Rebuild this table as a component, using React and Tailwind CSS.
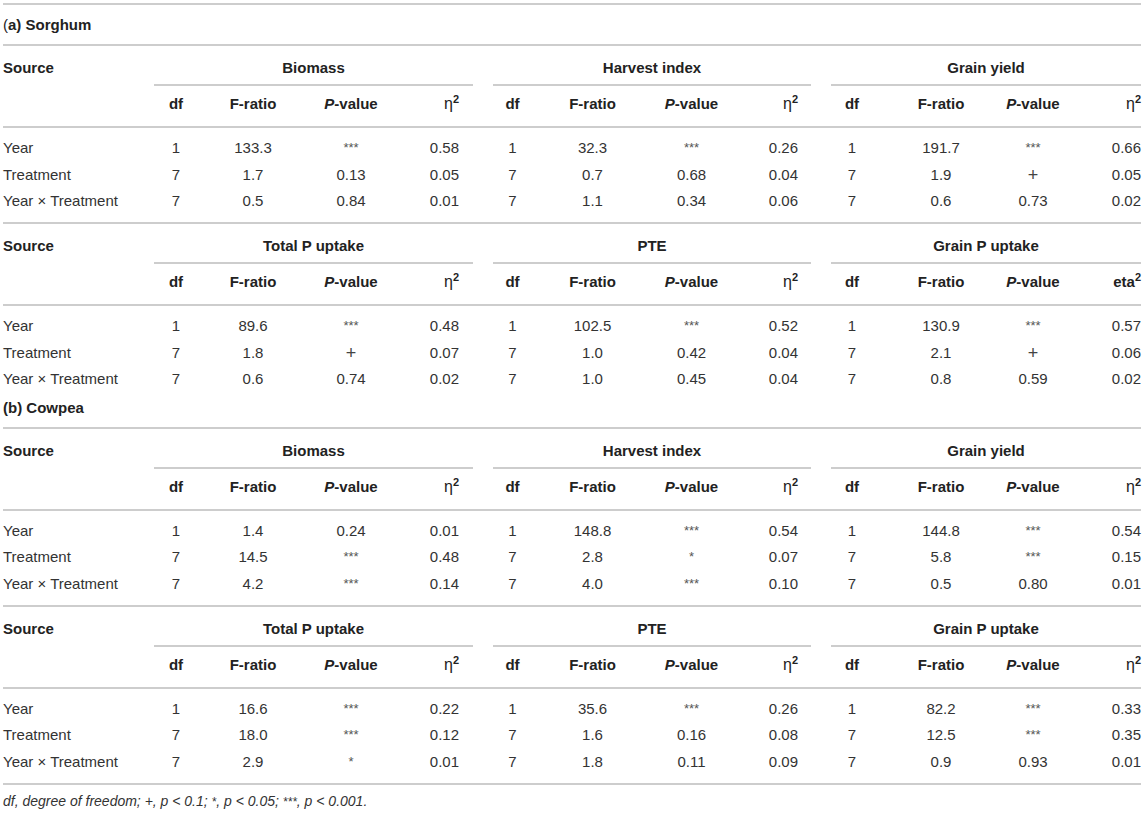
import React from "react";

const G = [
  { w: "w-[319px]", cols: "grid-cols-[44px_110px_86px_79px]", pr: "pr-[14px]" },
  { w: "w-[318px]", cols: "grid-cols-[39px_121px_77px_81px]", pr: "pr-[13px]" },
  { w: "w-[310px]", cols: "grid-cols-[42px_136px_48px_84px]", pr: "pr-0" },
];

const Line = () => <div className="h-[2px] bg-[#cdcdcd]" />;

function PVal({ v }) {
  if (v === "***" || v === "*")
    return <span className="text-[13px] text-[#555]">{v}</span>;
  if (v === "+") return <span className="text-[18px] leading-[20px] text-[#444]">+</span>;
  return <span>{v}</span>;
}

function Eta({ label }) {
  if (label === "eta")
    return (
      <span className="font-bold">
        eta<sup className="text-[11px] relative -top-[6px]">2</sup>
      </span>
    );
  return (
    <span>
      <span className="font-normal text-[16px]">η</span>
      <sup className="text-[11px] font-bold relative -top-[6px]">2</sup>
    </span>
  );
}

function Block({ names, etas, rows, last }) {
  return (
    <div>
      <div className="flex gap-[20px] h-[38px] pt-[12px] leading-[20px] font-bold text-[#222]">
        <div className="w-[131px] shrink-0">Source</div>
        {names.map((n, i) => (
          <div key={i} className={`${G[i].w} shrink-0 text-center`}>
            {n}
          </div>
        ))}
      </div>
      <div className="flex gap-[20px] h-[2px]">
        <div className="w-[131px] shrink-0" />
        {names.map((n, i) => (
          <div key={i} className={`${G[i].w} shrink-0 h-[2px] bg-[#cdcdcd]`} />
        ))}
      </div>
      <div className="flex gap-[20px] h-[40px] pt-[8px] leading-[20px] font-bold text-[#222]">
        <div className="w-[131px] shrink-0" />
        {names.map((n, i) => (
          <div key={i} className={`${G[i].w} shrink-0 grid ${G[i].cols}`}>
            <div className="flex justify-center whitespace-nowrap">df</div>
            <div className="flex justify-center whitespace-nowrap">F-ratio</div>
            <div className="flex justify-center whitespace-nowrap">
              <span>
                <i>P</i>-value
              </span>
            </div>
            <div className={`flex justify-end whitespace-nowrap ${G[i].pr}`}>
              <Eta label={etas[i]} />
            </div>
          </div>
        ))}
      </div>
      <Line />
      <div className={`pt-[7px] ${last ? "pb-[7.5px]" : ""}`}>
        {rows.map((r, ri) => (
          <div key={ri} className="flex gap-[20px] h-[26.5px] items-center leading-[20px]">
            <div className="w-[131px] shrink-0 whitespace-nowrap">{r.src}</div>
            {r.g.map((c, i) => (
              <div key={i} className={`${G[i].w} shrink-0 grid ${G[i].cols} items-center`}>
                <div className="flex justify-center whitespace-nowrap">{c[0]}</div>
                <div className="flex justify-center whitespace-nowrap">{c[1]}</div>
                <div className="flex justify-center items-center whitespace-nowrap h-[20px]">
                  <PVal v={c[2]} />
                </div>
                <div className={`flex justify-end whitespace-nowrap ${G[i].pr}`}>{c[3]}</div>
              </div>
            ))}
          </div>
        ))}
      </div>
    </div>
  );
}

const YT = "Year × Treatment";

const sorg1 = [
  { src: "Year", g: [["1", "133.3", "***", "0.58"], ["1", "32.3", "***", "0.26"], ["1", "191.7", "***", "0.66"]] },
  { src: "Treatment", g: [["7", "1.7", "0.13", "0.05"], ["7", "0.7", "0.68", "0.04"], ["7", "1.9", "+", "0.05"]] },
  { src: YT, g: [["7", "0.5", "0.84", "0.01"], ["7", "1.1", "0.34", "0.06"], ["7", "0.6", "0.73", "0.02"]] },
];
const sorg2 = [
  { src: "Year", g: [["1", "89.6", "***", "0.48"], ["1", "102.5", "***", "0.52"], ["1", "130.9", "***", "0.57"]] },
  { src: "Treatment", g: [["7", "1.8", "+", "0.07"], ["7", "1.0", "0.42", "0.04"], ["7", "2.1", "+", "0.06"]] },
  { src: YT, g: [["7", "0.6", "0.74", "0.02"], ["7", "1.0", "0.45", "0.04"], ["7", "0.8", "0.59", "0.02"]] },
];
const cow1 = [
  { src: "Year", g: [["1", "1.4", "0.24", "0.01"], ["1", "148.8", "***", "0.54"], ["1", "144.8", "***", "0.54"]] },
  { src: "Treatment", g: [["7", "14.5", "***", "0.48"], ["7", "2.8", "*", "0.07"], ["7", "5.8", "***", "0.15"]] },
  { src: YT, g: [["7", "4.2", "***", "0.14"], ["7", "4.0", "***", "0.10"], ["7", "0.5", "0.80", "0.01"]] },
];
const cow2 = [
  { src: "Year", g: [["1", "16.6", "***", "0.22"], ["1", "35.6", "***", "0.26"], ["1", "82.2", "***", "0.33"]] },
  { src: "Treatment", g: [["7", "18.0", "***", "0.12"], ["7", "1.6", "0.16", "0.08"], ["7", "12.5", "***", "0.35"]] },
  { src: YT, g: [["7", "2.9", "*", "0.01"], ["7", "1.8", "0.11", "0.09"], ["7", "0.9", "0.93", "0.01"]] },
];

const N1 = ["Biomass", "Harvest index", "Grain yield"];
const N2 = ["Total P uptake", "PTE", "Grain P uptake"];

export default function App() {
  return (
    <div className="w-[1145px] h-[813px] bg-white font-['Liberation_Sans',Arial,sans-serif] text-[15px] text-[#333] pt-[3px]">
      <div className="ml-[3px] w-[1138px]">
        <Line />
        <div className="h-[39px] flex items-center leading-[20px] font-bold text-[#222]">
          <span className="font-normal">(</span>a) Sorghum
        </div>
        <Line />
        <Block names={N1} etas={["η", "η", "η"]} rows={sorg1} last />
        <Line />
        <Block names={N2} etas={["η", "η", "eta"]} rows={sorg2} />
        <div className="h-[34px] pt-[5px] leading-[20px] font-bold text-[#222]">(b) Cowpea</div>
        <Line />
        <Block names={N1} etas={["η", "η", "η"]} rows={cow1} last />
        <Line />
        <Block names={N2} etas={["η", "η", "η"]} rows={cow2} last />
        <Line />
        <div className="pt-[6px] leading-[20px] italic text-[14px] text-[#333]">
          df, degree of freedom; +, p &lt; 0.1; <span className="text-[12px]">*</span>, p &lt; 0.05;{" "}
          <span className="text-[12px]">***</span>, p &lt; 0.001.
        </div>
      </div>
    </div>
  );
}
